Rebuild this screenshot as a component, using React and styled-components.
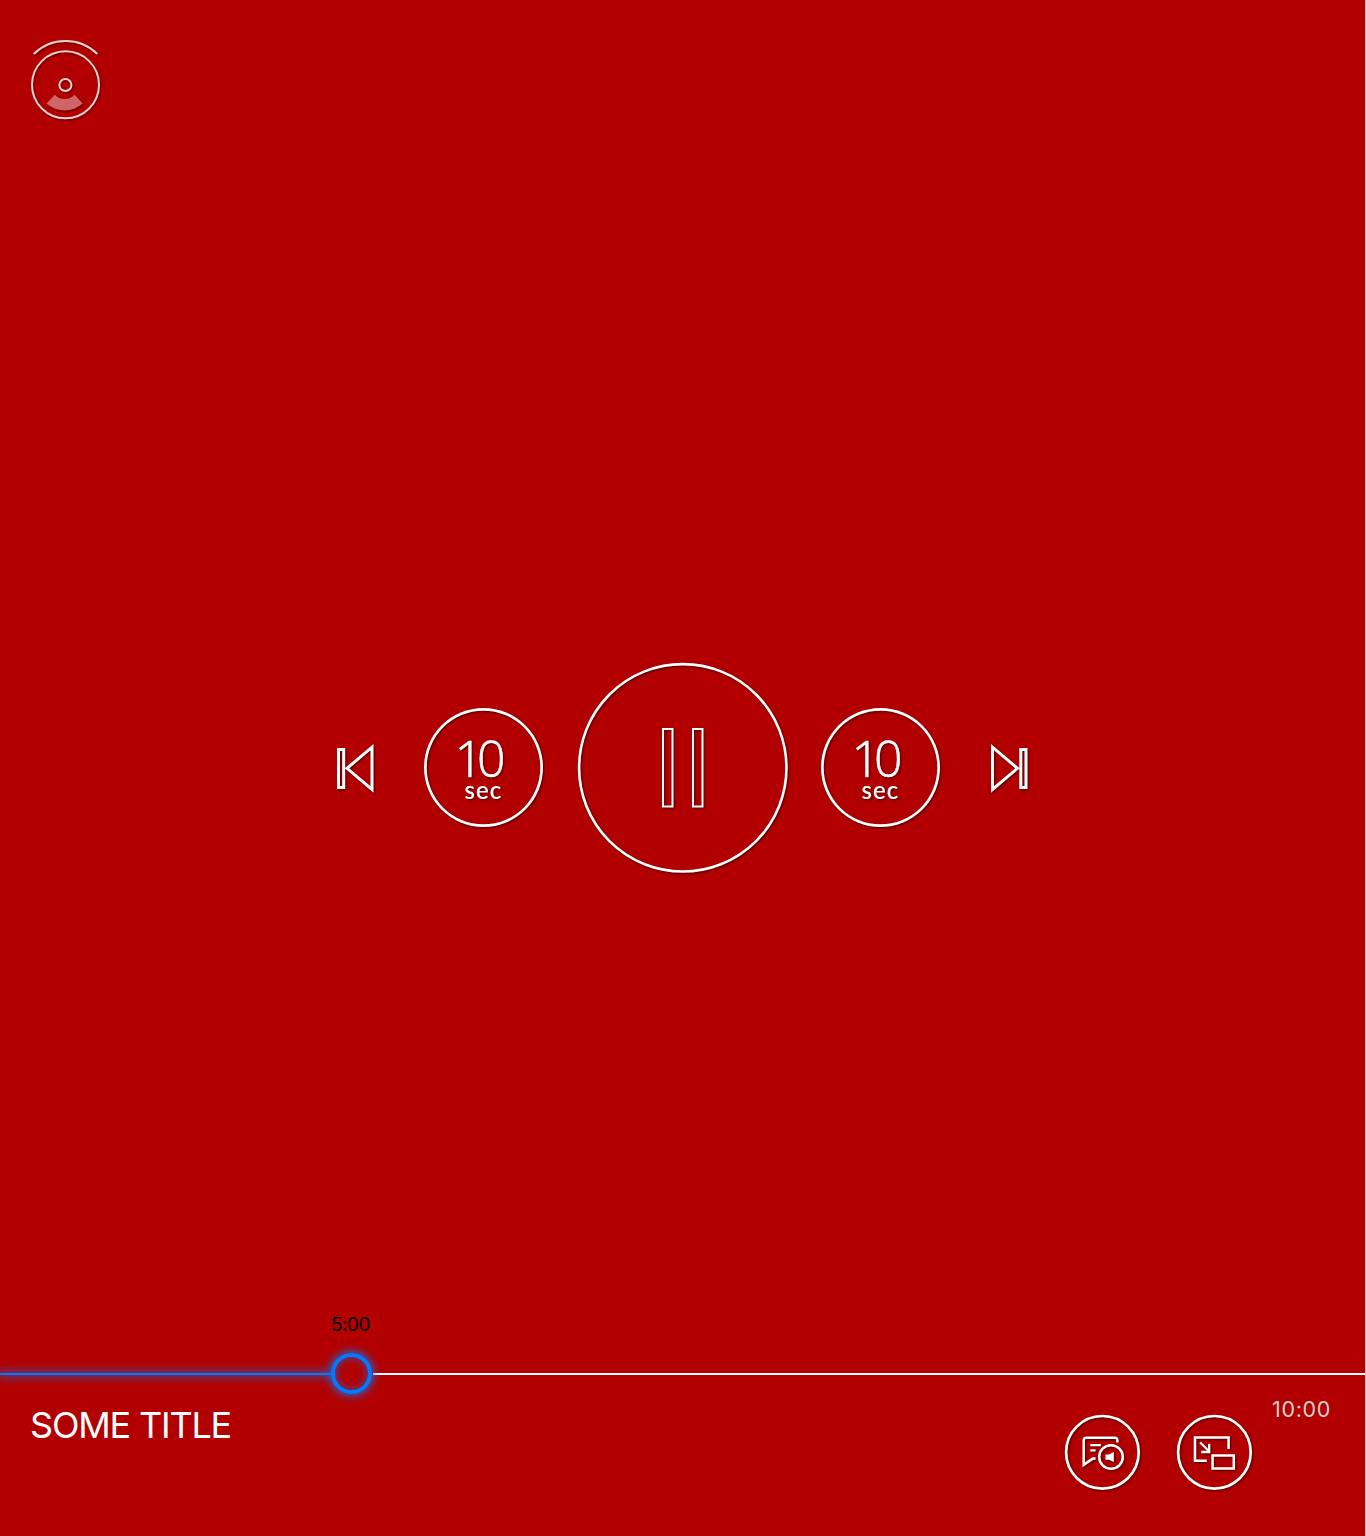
import React from "react";
import styled, { createGlobalStyle, css } from "styled-components";

const GlobalStyle = createGlobalStyle`
  *, *::before, *::after { box-sizing: border-box; }
  html, body { margin: 0; padding: 0; background: #fbb4b4; }
`;

const Player = styled.main`
  width: 1365px;
  height: 1536px;
  display: flex;
  flex-direction: column;
  overflow: hidden;
  background: #b20000;
  color: #fff;
  font-family: Inter, "Liberation Sans", sans-serif;
`;

const shadow = css`
  filter: drop-shadow(1px 1px 1px rgba(0, 0, 0, 0.6));
`;

const Header = styled.header`
  height: 662px;
  padding: 34px 0 0 25px;
`;

const Icon = styled.svg`
  display: block;
  flex: none;
  fill: none;
  stroke: #fff;
  overflow: visible;
  opacity: ${(p) => p.$opacity ?? 1};
  ${shadow}
`;

const Controls = styled.section`
  height: 211px;
  padding-left: 334px;
  display: flex;
  align-items: center;
`;

const PlainButton = styled.button`
  display: block;
  flex: none;
  padding: 0;
  border: 0;
  background: none;
  color: inherit;
  font: inherit;
  cursor: pointer;
`;

const RoundButton = styled(PlainButton)`
  width: ${(p) => p.$size}px;
  height: ${(p) => p.$size}px;
  margin-left: ${(p) => p.$gap}px;
  display: flex;
  align-items: center;
  justify-content: center;
  border-radius: 50%;
  box-shadow: inset 0 0 0 2.7px #fff;
  ${shadow}
`;

const CircleButton = styled(PlainButton)`
  margin-left: ${(p) => p.$gap || 0}px;
`;

const SkipLabel = styled.span`
  display: flex;
  flex-direction: column;
  align-items: center;
  padding-top: 4px;
`;

const SkipAmount = styled.span`
  font: 300 50px/40px "Open Sans", sans-serif;
  letter-spacing: -6px;
  padding-right: 13px;
  -webkit-text-stroke: 0.6px #fff;
`;

const SkipUnit = styled.span`
  font: 500 24px/24px Lato, sans-serif;
  letter-spacing: 1.1px;
  -webkit-text-stroke: 0.15px #fff;
`;

const Timeline = styled.div`
  height: 1px;
  margin-top: 500px;
  display: flex;
  align-items: center;
`;

const Elapsed = styled.div`
  width: 331px;
  height: 2px;
  flex: none;
  background: #007aff;
  box-shadow: 0 0 10px 1px #007aff;
`;

const Handle = styled.div`
  position: relative;
  width: 41px;
  height: 41px;
  flex: none;
  border: 4px solid #007aff;
  border-radius: 50%;
  box-shadow: 0 0 10px 1px #007aff, inset 0 0 10px rgba(0, 122, 255, 0.6);
`;

const Remaining = styled.div`
  height: 2px;
  flex: 1;
  margin-left: 1px;
  background: #fff;
`;

const Tooltip = styled.output`
  position: absolute;
  left: 50%;
  bottom: 53px;
  transform: translateX(-50%);
  color: #000;
  font-size: 19px;
  line-height: 24px;
  letter-spacing: -0.5px;
  padding-right: 2px;
  white-space: nowrap;
`;

const Footer = styled.footer`
  flex: 1;
  display: flex;
  align-items: flex-start;
`;

const Title = styled.h1`
  width: 1033px;
  margin: 29px 0 0;
  padding-left: 30px;
  font-size: 36px;
  font-weight: 400;
  line-height: 44px;
  letter-spacing: -1.2px;
`;

const Actions = styled.div`
  display: flex;
  margin-top: 40px;
`;

const Duration = styled.time`
  margin: 22px 0 0 20px;
  color: #d0d0d0;
  font-size: 21.5px;
  line-height: 26px;
  font-weight: 400;
  letter-spacing: 0.7px;
`;

function Skip({ gap, label }) {
  return (
    <RoundButton $size={119} $gap={gap} aria-label={label}>
      <SkipLabel>
        <SkipAmount>10</SkipAmount>
        <SkipUnit>sec</SkipUnit>
      </SkipLabel>
    </RoundButton>
  );
}

export default function App() {
  return (
    <>
      <GlobalStyle />
      <Player>
        <Header>
          <Icon width="82" height="92" viewBox="25 34 82 92" strokeWidth="2" $opacity={0.82}>
            <circle cx="65.5" cy="84.8" r="33.5" />
            <circle cx="65.4" cy="85" r="6" />
            <path d="M33.7 54A45.5 45.5 0 0 1 97.4 54" />
            <path d="M46.5 103.6 54.7 94.7A14 14 0 0 0 74.7 94.7L82.7 103.6A27 27 0 0 1 46.5 103.6Z" fill="#d77c7c" stroke="none" />
          </Icon>
        </Header>

        <Controls>
          <PlainButton aria-label="Previous">
            <Icon width="43" height="56" viewBox="334 740 43 56" strokeWidth="3">
              <path d="M338.5 749.5H343.7V787.5H338.5Z" />
              <path d="M372 747.2V789.4L347 768.3Z" />
            </Icon>
          </PlainButton>
          <Skip gap={47} label="Back" />
          <PlainButton aria-label="Pause">
            <Icon width="279" height="211" viewBox="543 662 279 211">
              <circle cx="682.8" cy="767.8" r="103.7" strokeWidth="2.6" />
              <path d="M663 729H672.5V806.5H663ZM693 729H702.5V806.5H693Z" strokeWidth="2" />
            </Icon>
          </PlainButton>
          <Skip gap={-1} label="Forward" />
          <CircleButton aria-label="Next" $gap={47}>
            <Icon width="43" height="56" viewBox="987 740 43 56" strokeWidth="3">
              <path d="M1020.8 749.5H1026V787.5H1020.8Z" />
              <path d="M992.5 747.2V789.4L1017.5 768.3Z" />
            </Icon>
          </CircleButton>
        </Controls>

        <Timeline>
          <Elapsed />
          <Handle>
            <Tooltip>5:00</Tooltip>
          </Handle>
          <Remaining />
        </Timeline>

        <Footer>
          <Title>SOME TITLE</Title>
          <Actions>
            <CircleButton aria-label="Subtitles and audio" $gap={31}>
              <Icon width="76" height="76" viewBox="1064 1414 76 76" strokeWidth="2.5">
                <circle cx="1102.4" cy="1452.3" r="36.3" strokeWidth="2.7" />
                <path d="M1117.4 1442.6V1440.3Q1117.4 1437.7 1114.8 1437.7H1086.4Q1083.7 1437.7 1083.7 1440.4V1464.8L1092.8 1458.6H1095.6" />
                <path d="M1090.3 1445.2H1100.8M1090.3 1450.3H1095.6" strokeWidth="2.2" />
                <circle cx="1111" cy="1457" r="11.8" />
                <path d="M1105.5 1454.5H1109L1113.8 1452V1462L1109 1459.8H1105.5Z" fill="#fff" stroke="none" />
              </Icon>
            </CircleButton>
            <CircleButton aria-label="Picture in picture" $gap={36}>
              <Icon width="76" height="76" viewBox="1176 1414 76 76" strokeWidth="2.5">
                <circle cx="1214.4" cy="1452.3" r="36.3" strokeWidth="2.7" />
                <path d="M1228.6 1449V1437.6H1195V1460.7H1206.8" />
                <path d="M1212.6 1455.4H1233.8V1468.4H1212.6Z" />
                <path d="M1200.2 1442.5 1209 1451.2M1209.2 1443.7V1452H1201.2" strokeWidth="2.3" />
              </Icon>
            </CircleButton>
          </Actions>
          <Duration>10:00</Duration>
        </Footer>
      </Player>
    </>
  );
}
